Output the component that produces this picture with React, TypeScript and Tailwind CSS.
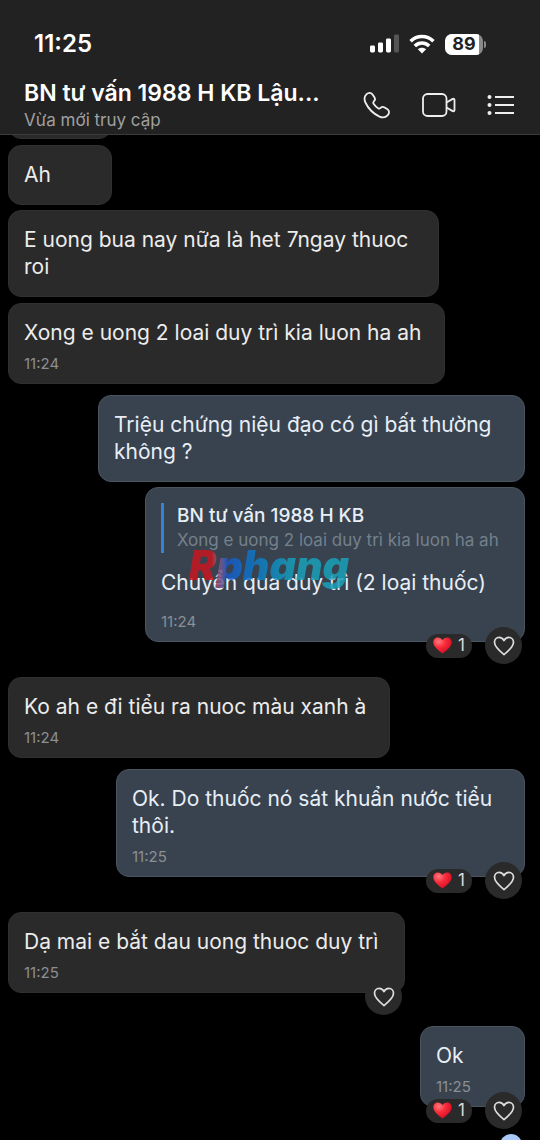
import React from 'react';
import clsx from 'clsx';

type Message = {
  id: number;
  text: string;
  mine?: boolean;
  time?: string;
  quote?: { name: string; text: string };
  count?: number;
  likeable?: boolean;
  width: string;
  gap: string;
};

const messages: Message[] = [
  { id: 1, text: 'Ah', width: 'w-[104px]', gap: 'mt-[6px]' },
  { id: 2, text: 'E uong bua nay nữa là het 7ngay thuoc roi', width: 'w-[431px]', gap: 'mt-[5px]' },
  { id: 3, text: 'Xong e uong 2 loai duy trì kia luon ha ah', time: '11:24', width: 'w-[437px]', gap: 'mt-[6px]' },
  { id: 4, text: 'Triệu chứng niệu đạo có gì bất thường không ?', mine: true, width: 'w-[427px]', gap: 'mt-[11px]' },
  {
    id: 5,
    text: 'Chuyển qua duy trì (2 loại thuốc)',
    mine: true,
    time: '11:24',
    quote: { name: 'BN tư vấn 1988 H KB', text: 'Xong e uong 2 loai duy trì kia luon ha ah' },
    count: 1,
    likeable: true,
    width: 'w-[380px]',
    gap: 'mt-[5px]',
  },
  { id: 6, text: 'Ko ah e đi tiểu ra nuoc màu xanh à', time: '11:24', width: 'w-[382px]', gap: 'mt-[35px]' },
  {
    id: 7,
    text: 'Ok. Do thuốc nó sát khuẩn nước tiểu thôi.',
    mine: true,
    time: '11:25',
    count: 1,
    likeable: true,
    width: 'w-[409px]',
    gap: 'mt-[11px]',
  },
  { id: 8, text: 'Dạ mai e bắt dau uong thuoc duy trì', time: '11:25', likeable: true, width: 'w-[397px]', gap: 'mt-[35px]' },
  { id: 9, text: 'Ok', mine: true, time: '11:25', count: 1, likeable: true, width: 'w-[105px]', gap: 'mt-[33px]' },
];

function StatusBar() {
  return (
    <div className="flex items-center justify-between pr-[54px] pl-[34px] pt-7">
      <span className="text-2xl font-semibold">11:25</span>
      <div className="flex items-center gap-[10px]">
        <svg width="30" height="20" viewBox="0 0 30 20" aria-hidden="true">
          <rect x="1" y="11.5" width="5" height="7" rx="1.4" fill="#fff" />
          <rect x="9" y="8.5" width="5" height="10" rx="1.4" fill="#fff" />
          <rect x="17" y="4.5" width="5" height="14" rx="1.4" fill="#fff" />
          <rect x="25" y="0.5" width="5" height="18" rx="1.4" fill="#555" />
        </svg>
        <svg width="26" height="20" viewBox="0 0 26 20" fill="none" stroke="#fff" strokeWidth="3.6" aria-hidden="true">
          <path d="M1.6 7.2C8 .9 18 .9 24.4 7.2" />
          <path d="M5.8 12c4.2-4 10.2-4 14.4 0" />
          <path d="M13 19.4l-4.1-4.1c2.4-2 5.8-2 8.2 0z" fill="#fff" stroke="none" />
        </svg>
        <div className="flex items-center gap-px">
          <div className="flex h-[21px] w-[38px] items-center overflow-hidden rounded-[7px] bg-[#8a8a8a]">
            <span className="flex h-full w-[34px] items-center justify-center bg-white pl-1 text-lg font-bold text-[#222]">
              89
            </span>
          </div>
          <span className="h-[7px] w-[2px] rounded-r-full bg-[#8a8a8a]" />
        </div>
      </div>
    </div>
  );
}

function Header() {
  return (
    <header className="relative z-10 border-b border-[#3c3c3c] bg-[#222] pb-[2px] text-white">
      <StatusBar />
      <div className="mt-[18px] flex items-center justify-between gap-6 pr-[25px] pl-6">
        <div className="min-w-0">
          <h1 className="truncate text-[23px] leading-[30px] font-semibold">BN tư vấn 1988 H KB Lậu...</h1>
          <p className="text-[17px] leading-6 text-[#a0a0a0]">Vừa mới truy cập</p>
        </div>
        <div className="flex shrink-0 items-center gap-[31px]">
          <button type="button" aria-label="Gọi thoại">
            <svg width="28" height="28" viewBox="0 0 28 28" fill="none" stroke="#eee" strokeWidth="1.8" strokeLinejoin="round">
              <path d="M3.6 3.2C5.6 1.3 8.3 1.5 9.9 3.9l1.5 2.4c1 1.6.7 2.9-.5 4-.8.8-.9 1.5-.3 2.4 1.2 1.8 2.7 3.3 4.5 4.5.9.6 1.7.5 2.5-.3 1.1-1.2 2.5-1.4 4-.4l2.5 1.6c2.3 1.5 2.6 4 .7 6-2.1 2.4-5.1 2.9-8.3 1.5C10.6 22.8 5.2 17.4 2.4 11.5.9 8.2 1.3 5.4 3.6 3.2z" />
            </svg>
          </button>
          <button type="button" aria-label="Gọi video">
            <svg width="34" height="28" viewBox="0 0 34 28" fill="none" stroke="#eee" strokeWidth="1.8" strokeLinejoin="round">
              <rect x="1" y="3" width="23.5" height="22" rx="4.5" />
              <path d="M24.5 11.5l5.8-3.4c1.2-.7 2.2-.2 2.2 1v9.8c0 1.2-1 1.7-2.2 1l-5.8-3.4" />
            </svg>
          </button>
          <button type="button" aria-label="Tùy chọn">
            <svg width="28" height="28" viewBox="0 0 28 28" stroke="#eee" strokeWidth="1.8" fill="#eee">
              <path d="M8 6h19M8 14h19M8 22h19" />
              <g stroke="none">
                <circle cx="2.5" cy="6" r="2" />
                <circle cx="2.5" cy="14" r="2" />
                <circle cx="2.5" cy="22" r="2" />
              </g>
            </svg>
          </button>
        </div>
      </div>
    </header>
  );
}

function Reactions({ count }: { count?: number }) {
  return (
    <div className="absolute right-[2px] -bottom-[23px] flex items-center gap-[13px]">
      {count && (
        <span className="flex h-6 items-center gap-[6px] rounded-full bg-[#2a2a2a] px-[7px] text-[17px] text-[#ddd]">
          <svg width="19" height="17" viewBox="0 0 19 17" aria-hidden="true">
            <defs>
              <radialGradient id="heart" cx="0.3" cy="0.25" r="0.8">
                <stop offset="0" stopColor="#ff7a80" />
                <stop offset="0.45" stopColor="#f92c3c" />
                <stop offset="1" stopColor="#d30d22" />
              </radialGradient>
            </defs>
            <path
              d="M9.5 16.5C5 13.2.3 9.6.3 5.3.3 2.5 2.4.5 4.9.5c1.9 0 3.6 1 4.6 2.6 1-1.6 2.7-2.6 4.6-2.6 2.5 0 4.6 2 4.6 4.8 0 4.3-4.7 7.9-9.2 11.2z"
              fill="url(#heart)"
            />
          </svg>
          {count}
        </span>
      )}
      <button type="button" aria-label="Thích" className="flex size-[37px] items-center justify-center rounded-full bg-[#2a2a2a]">
        <svg width="22" height="20" viewBox="0 0 22 20" fill="none" stroke="#ddd" strokeWidth="1.7" strokeLinejoin="round">
          <path d="M11 18.6C6 14.6 1.5 10.7 1.5 6.3c0-2.9 2.1-4.9 4.6-4.9 2.1 0 3.9 1.2 4.9 3.2 1-2 2.8-3.2 4.9-3.2 2.5 0 4.6 2 4.6 4.9 0 4.4-4.5 8.3-9.5 12.3z" />
        </svg>
      </button>
    </div>
  );
}

function Watermark() {
  return (
    <span className="pointer-events-none absolute top-[53px] left-[43px] bg-linear-to-r from-[#c81620] from-14% via-[#1858c8] via-23% to-[#1aa0b8] to-65% bg-clip-text pr-1 text-[41px] leading-[48px] font-black text-transparent italic opacity-85">
      Rphang
    </span>
  );
}

function Bubble({ message }: { message: Message }) {
  const { text, mine, time, quote, count, likeable, width, gap } = message;
  return (
    <li
      className={clsx(
        'relative max-w-full rounded-[13px] border px-[15px] pt-[15px]',
        time ? 'pb-[10px]' : 'pb-4',
        mine ? 'self-end border-[#4b5560] bg-[#38434f] text-[#e8eef6]' : 'self-start border-[#303030] bg-[#2a2a2a] text-[#ececec]',
        width,
        gap,
      )}
    >
      {quote && (
        <blockquote className="mb-4 border-l-[3px] border-[#2f86d6] pl-[13px]">
          <p className="text-[19px] leading-[25px] font-medium">{quote.name}</p>
          <p className="text-[17px] leading-[25px] whitespace-nowrap text-[#74808c]">{quote.text}</p>
        </blockquote>
      )}
      <p className="text-[21px] leading-[27px]">{text}</p>
      {time && (
        <time className={clsx('block text-[15px] leading-[18px] text-[#8b8f94]', quote ? 'mt-[17px]' : 'mt-[9px]')}>{time}</time>
      )}
      {quote && <Watermark />}
      {likeable && <Reactions count={count} />}
    </li>
  );
}

export default function App() {
  return (
    <div className="flex h-screen flex-col overflow-hidden bg-black font-[Inter,'Liberation_Sans',sans-serif]">
      <Header />
      <main className="flex-1">
        <ul className="flex flex-col pr-[15px] pl-2">
          <li className="-mt-14 h-[60px] w-[104px] rounded-[13px] border border-[#303030] bg-[#2a2a2a]" aria-hidden="true" />
          {messages.map((message) => (
            <Bubble key={message.id} message={message} />
          ))}
          <li className="mt-[27px] mr-[3px] size-[22px] self-end rounded-full bg-[#a9c8f5]" aria-hidden="true" />
        </ul>
      </main>
    </div>
  );
}
